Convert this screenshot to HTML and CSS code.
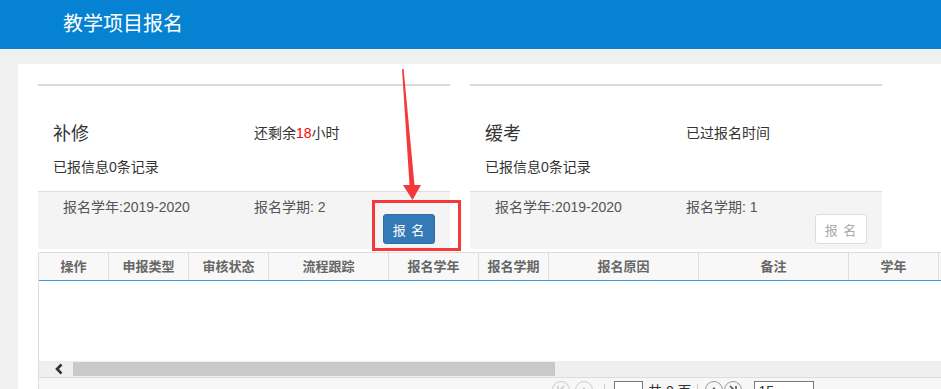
FILE: index.html
```html
<!DOCTYPE html>
<html lang="zh-CN">
<head>
    <meta charset="UTF-8">
    <title>教学项目报名</title>
    <link rel="stylesheet" href="styles.css">
</head>
<body>
    <!-- Top Bar -->
    <div class="topbar">教学项目报名</div>

    <div class="main">
        <div class="panel">
            <!-- Project Cards -->
            <div class="cards">
                <div class="card">
                    <div class="card-head">
                        <div class="card-row">
                            <span class="card-title">补修</span>
                            <span>还剩余<em class="hours">18</em>小时</span>
                        </div>
                        <div class="card-count">已报信息0条记录</div>
                    </div>
                    <div class="card-foot">
                        <div class="card-info">
                            <span>报名学年:2019-2020</span>
                            <span>报名学期: 2</span>
                        </div>
                        <button class="btn-apply">报 名</button>
                    </div>
                </div>

                <div class="card">
                    <div class="card-head">
                        <div class="card-row">
                            <span class="card-title">缓考</span>
                            <span>已过报名时间</span>
                        </div>
                        <div class="card-count">已报信息0条记录</div>
                    </div>
                    <div class="card-foot">
                        <div class="card-info">
                            <span>报名学年:2019-2020</span>
                            <span>报名学期: 1</span>
                        </div>
                        <button class="btn-apply disabled" disabled>报 名</button>
                    </div>
                </div>
            </div>

            <!-- Records Grid -->
            <div class="grid">
                <div class="grid-head">
                    <div>操作</div>
                    <div>申报类型</div>
                    <div>审核状态</div>
                    <div>流程跟踪</div>
                    <div>报名学年</div>
                    <div>报名学期</div>
                    <div>报名原因</div>
                    <div>备注</div>
                    <div>学年</div>
                    <div></div>
                </div>
                <div class="grid-body"></div>
                <div class="hscroll">
                    <span class="hscroll-arrow">
                        <svg width="10" height="12" viewBox="0 0 10 12"><path d="M7.5 1.5 L3 6 L7.5 10.5" fill="none" stroke="#333" stroke-width="2.6"/></svg>
                    </span>
                    <span class="hscroll-thumb"></span>
                </div>
                <div class="pager">
                    <span class="pg-btn">
                        <svg width="16" height="16" viewBox="0 0 16 16"><path d="M5 4v8M11 4L7 8l4 4" fill="none" stroke="#ccc" stroke-width="1.6"/></svg>
                    </span>
                    <span class="pg-btn">
                        <svg width="16" height="16" viewBox="0 0 16 16"><path d="M5 9l3-4 3 4z" fill="#ccc"/></svg>
                    </span>
                    <span class="pg-sep"></span>
                    <span class="pg-input"></span>
                    <span class="pg-text">共 0 页</span>
                    <span class="pg-sep sep-b"></span>
                    <span class="pg-btn btn-c">
                        <svg width="16" height="16" viewBox="0 0 16 16"><path d="M5 9l3-4 3 4z" fill="#555"/></svg>
                    </span>
                    <span class="pg-btn btn-d">
                        <svg width="16" height="16" viewBox="0 0 16 16"><path d="M11 4v8M5 4l4 4-4 4" fill="none" stroke="#555" stroke-width="1.6"/></svg>
                    </span>
                    <span class="pg-select">15</span>
                </div>
            </div>
        </div>
    </div>

    <!-- Annotation -->
    <svg class="mark-arrow" width="941" height="389" viewBox="0 0 941 389">
        <polygon points="402,69 403.6,69 414.5,185 421,185 412.5,200 403,185 409.5,185" fill="#f5393b"/>
    </svg>
    <div class="mark-box"></div>
</body>
</html>
```

FILE: styles.css
```css
/* Page */
body {
    margin: 0;
    width: 941px;
    height: 389px;
    overflow: hidden;
    position: relative;
    font-family: "Liberation Sans", "Noto Sans CJK SC", Arial, sans-serif;
    font-size: 14px;
    color: #333;
    background: #f0f0f0;
}

/* Top Bar */
.topbar {
    height: 49px;
    line-height: 48px;
    padding-left: 63px;
    background: #0583d2;
    color: #fff;
    font-size: 20px;
}

/* Main */
.main {
    padding: 15px 0 0 18px;
}

.panel {
    width: 1000px;
    height: 330px;
    background: #fff;
    padding: 20px 0 0 20px;
    box-sizing: border-box;
}

/* Cards */
.cards {
    display: flex;
    gap: 20px;
}

.card {
    width: 412px;
    border-top: 2px solid #dadada;
}

.card-head {
    padding: 32px 15px 14px;
}

.card-row {
    display: grid;
    grid-template-columns: 201px auto;
    align-items: center;
    height: 28px;
}

.card-title {
    font-size: 18px;
    color: #333;
}

.hours {
    font-style: normal;
    color: #f00;
}

.card-count {
    margin-top: 11px;
    line-height: 20px;
}

.card-foot {
    display: flex;
    flex-direction: column;
    background: #f4f4f4;
    border-top: 1px solid #ddd;
    border-radius: 0 0 3px 3px;
    padding: 5px 15px 5px 25px;
    color: #555;
}

.card-info {
    display: grid;
    grid-template-columns: 191px auto;
    line-height: 20px;
}

.btn-apply {
    align-self: flex-end;
    margin-top: -3px;
    width: 52px;
    height: 30px;
    padding: 0;
    border: 1px solid #2e6da4;
    border-radius: 3px;
    background: #337ab7;
    color: #fff;
    font-family: inherit;
    font-size: 13px;
    letter-spacing: 1px;
}

.btn-apply.disabled {
    background: #fff;
    border-color: #ddd;
    color: #aaa;
}

/* Records Grid */
.grid {
    margin-top: 3px;
    border-top: 1px solid #ddd;
    border-left: 1px solid #ddd;
}

.grid-head {
    display: grid;
    grid-template-columns: 70px 80px 80px 120px 90px 70px 150px 150px 90px 1fr;
    height: 27px;
    background: #f8f8f8;
    border-bottom: 1px solid #3c9be0;
}

.grid-head div {
    border-right: 1px solid #ddd;
    text-align: center;
    line-height: 27px;
    font-size: 13px;
    font-weight: bold;
    color: #666;
}

.grid-body {
    height: 80px;
    background: #fff;
}

.hscroll {
    display: flex;
    align-items: center;
    height: 16px;
    background: #efefef;
}

.hscroll-arrow {
    display: flex;
    width: 34px;
    padding-left: 15px;
    box-sizing: border-box;
}

.hscroll-thumb {
    width: 482px;
    height: 14px;
    background: #c9c9c9;
}

.pager {
    display: flex;
    align-items: flex-start;
    gap: 5px;
    height: 20px;
    padding: 3px 0 0 513px;
    background: #f7f7f7;
    border-top: 1px solid #ddd;
    font-size: 14px;
    color: #333;
}

.pg-btn {
    display: flex;
    align-items: center;
    justify-content: center;
    width: 18px;
    height: 18px;
    border: 1px solid #ccc;
    border-radius: 50%;
    box-sizing: border-box;
}

.pg-sep {
    width: 1px;
    height: 14px;
    margin: 3px 4px 0 6px;
    background: #ccc;
}

.pg-sep.sep-b {
    margin: 3px 2px 0 0;
}

.pg-btn.btn-c {
    border-color: #999;
}

.pg-btn.btn-d {
    margin-left: -4px;
    border-color: #999;
}

.pg-input {
    width: 27px;
    height: 18px;
    border: 1px solid #777;
    background: #fff;
}

.pg-text {
    line-height: 20px;
}

.pg-select {
    width: 60px;
    height: 20px;
    margin-left: 7px;
    border: 1px solid #777;
    background: #fff;
    padding-left: 4px;
    box-sizing: border-box;
    line-height: 18px;
}

/* Annotation overlay */
.mark-arrow {
    position: absolute;
    left: 0;
    top: 0;
    pointer-events: none;
}

.mark-box {
    position: absolute;
    left: 372px;
    top: 200px;
    width: 89px;
    height: 51px;
    border: 3px solid #f5393b;
    box-sizing: border-box;
}
```
